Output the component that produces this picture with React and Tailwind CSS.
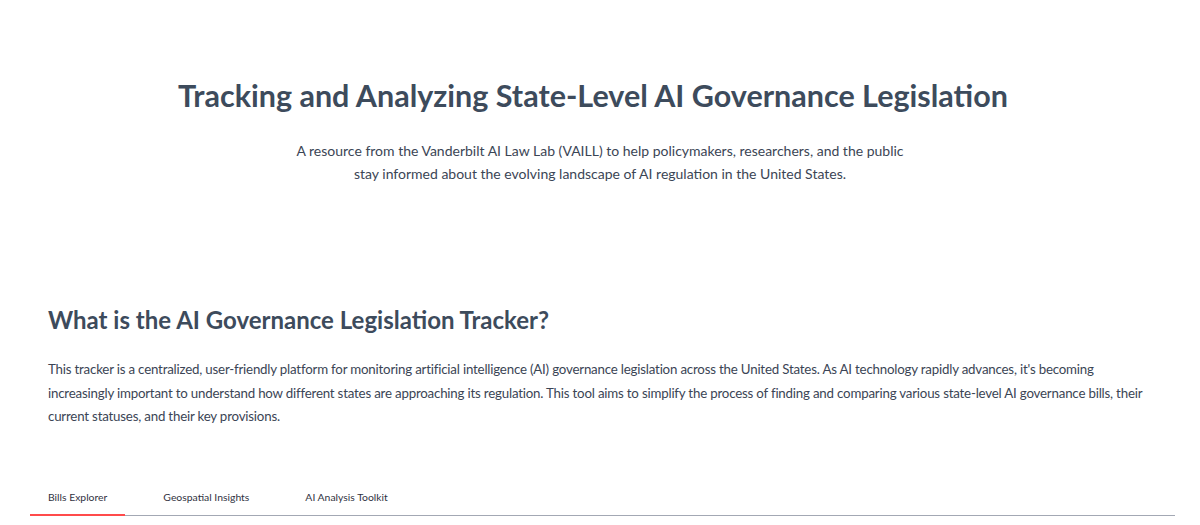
export default function App() {
  const tabs = ["Bills Explorer", "Geospatial Insights", "AI Analysis Toolkit"];
  return (
    <div className="min-h-screen bg-white font-['Lato',sans-serif] text-[#3b4555] overflow-hidden">
      {/* Hero */}
      <div className="pt-[74px] text-center">
        <h1 className="pr-[14px] text-[30.5px] font-bold leading-[42px] text-[#3d4b5c]">
          Tracking and Analyzing State-Level AI Governance Legislation
        </h1>
        <p className="mt-[23px] text-[14px] leading-[23px]">
          A resource from the Vanderbilt AI Law Lab (VAILL) to help policymakers, researchers, and the public
          <br />
          stay informed about the evolving landscape of AI regulation in the United States.
        </p>
      </div>

      {/* About */}
      <div className="px-[48px] pt-[119px]">
        <h2 className="text-[24px] font-bold leading-[32px] text-[#3d4b5c]">
          What is the AI Governance Legislation Tracker?
        </h2>
        <p className="mt-[22px] text-[13.3px] leading-[23.5px] tracking-[-0.2px]">
          This tracker is a centralized, user-friendly platform for monitoring artificial intelligence (AI) governance
          legislation across the United States. As AI technology rapidly advances, it's becoming increasingly important
          to understand how different states are approaching its regulation. This tool aims to simplify the process of
          finding and comparing various state-level AI governance bills, their current statuses, and their key provisions.
        </p>
      </div>

      {/* Tabs */}
      <div className="ml-[30px] mr-[25px] mt-[60px] flex gap-[20px] border-b border-[#a3a8b4]">
        {tabs.map((t, i) => (
          <div
            key={t}
            className={`px-[18px] pb-[9px] text-[10.4px] leading-[16px] text-[#31333f] ${
              i === 0 ? "border-b-2 border-[#ff4b4b] -mb-[1px]" : ""
            }`}
          >
            {t}
          </div>
        ))}
      </div>
    </div>
  );
}
